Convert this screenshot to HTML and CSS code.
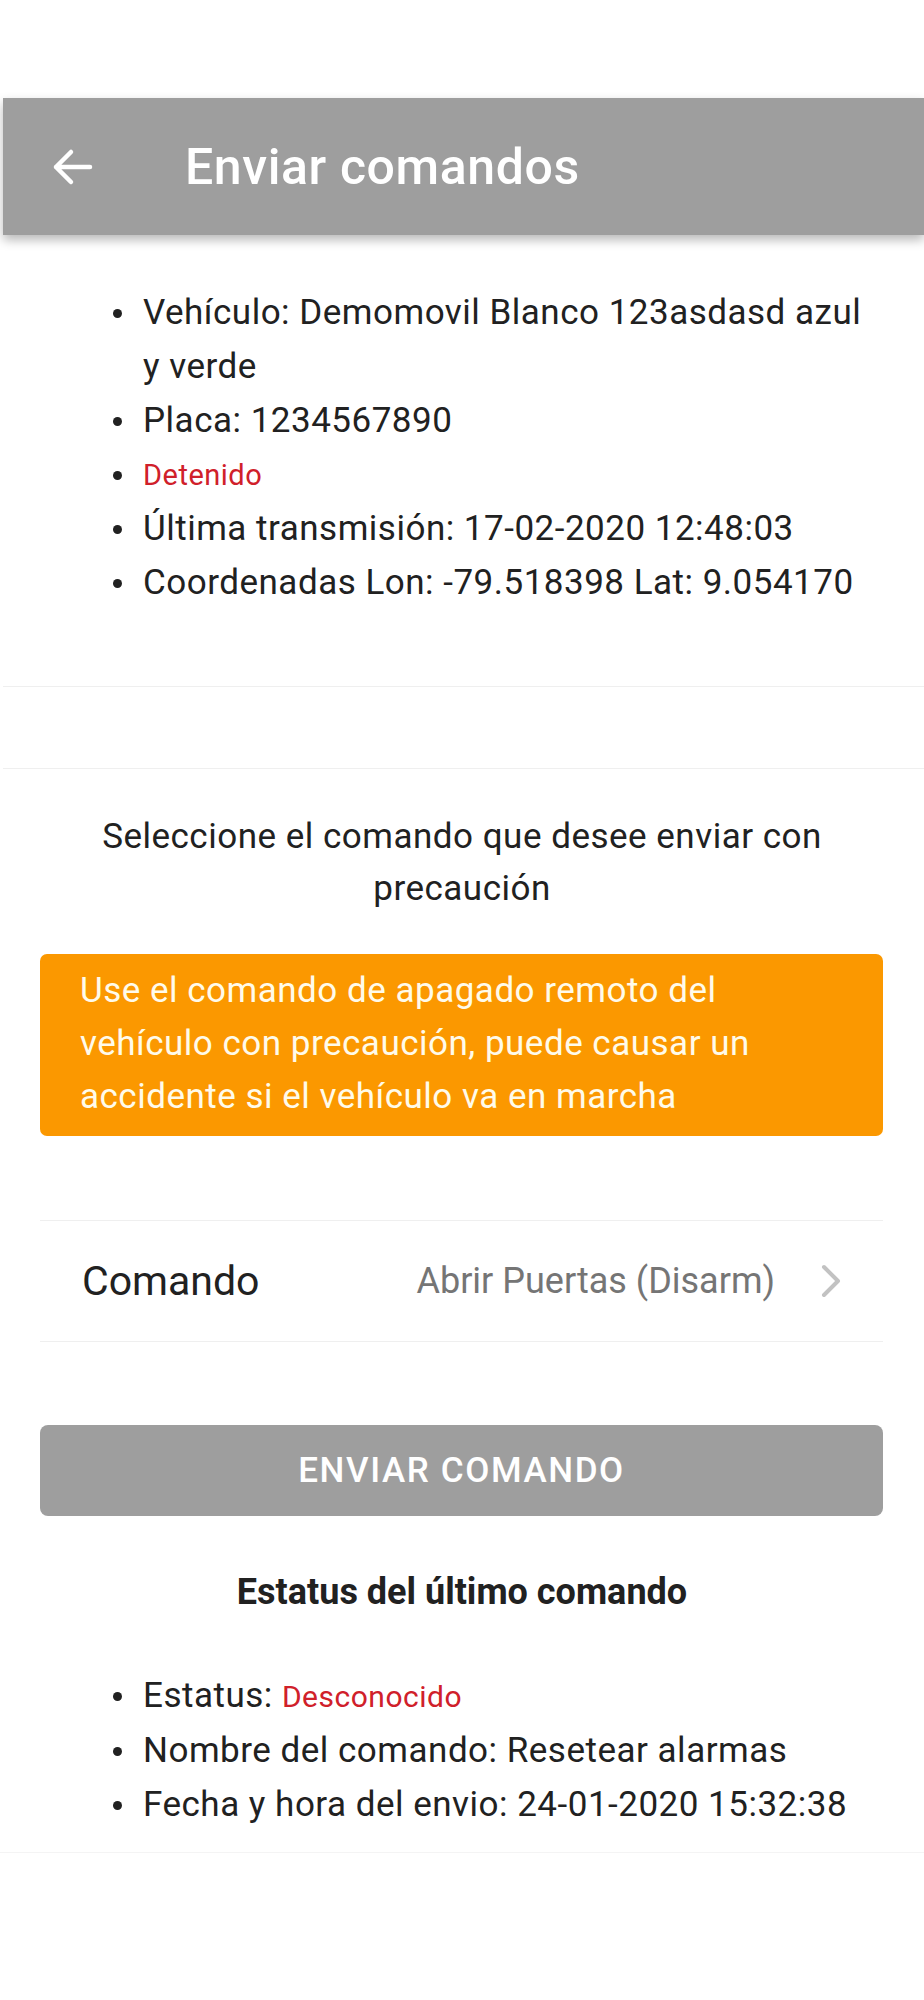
FILE: index.html
```html
<!DOCTYPE html>
<html lang="es">
<head>
  <meta charset="UTF-8" />
  <title>Enviar comandos</title>
  <link rel="stylesheet" href="styles.css">
</head>
<body>

  <div class="status-space"></div>

  <header class="appbar">
    <button class="back-btn" aria-label="Volver">
      <svg width="44" height="44" viewBox="0 0 44 44">
        <path d="M40 22 H6 M21 7 L6 22 L21 37" fill="none" stroke="#ffffff" stroke-width="4.5" stroke-linecap="round" stroke-linejoin="round"/>
      </svg>
    </button>
    <h1>Enviar comandos</h1>
  </header>

  <ul class="info-list vehicle-info">
    <li>Vehículo: Demomovil Blanco 123asdasd azul y verde</li>
    <li>Placa: 1234567890</li>
    <li class="small"><span class="red">Detenido</span></li>
    <li>Última transmisión: 17-02-2020 12:48:03</li>
    <li>Coordenadas Lon: -79.518398 Lat: 9.054170</li>
  </ul>

  <div class="divider"></div>
  <div class="spacer"></div>
  <div class="divider"></div>

  <p class="select-text">Seleccione el comando que desee enviar con precaución</p>

  <div class="warning">
    Use el comando de apagado remoto del vehículo con precaución, puede causar un accidente si el vehículo va en marcha
  </div>

  <div class="command-row">
    <span class="command-label">Comando</span>
    <span class="command-value">Abrir Puertas (Disarm)</span>
    <svg class="chevron" width="22" height="34" viewBox="0 0 22 34">
      <path d="M4 3 L18 17 L4 31" fill="none" stroke="#c2c2c2" stroke-width="4" stroke-linecap="round" stroke-linejoin="round"/>
    </svg>
  </div>

  <button class="send-btn">Enviar comando</button>

  <h2 class="status-title">Estatus del último comando</h2>

  <ul class="info-list last-status">
    <li>Estatus: <span class="red small-inline">Desconocido</span></li>
    <li>Nombre del comando: Resetear alarmas</li>
    <li>Fecha y hora del envio: 24-01-2020 15:32:38</li>
  </ul>

  <div class="bottom-line"></div>

</body>
</html>
```

FILE: styles.css
```css
body {
  margin: 0;
  font-family: Roboto, 'Noto Sans', sans-serif;
  background: #ffffff;
  color: #212121;
}

.status-space {
  height: 98px;
}

.appbar {
  height: 137px;
  margin-left: 3px;
  background-color: #9e9e9e;
  display: flex;
  align-items: center;
  box-shadow: 0 5px 10px rgba(0, 0, 0, 0.28);
  position: relative;
  z-index: 1;
}

.back-btn {
  background: none;
  border: none;
  padding: 0;
  margin-left: 47px;
  width: 44px;
  height: 44px;
  display: flex;
  cursor: pointer;
}

.appbar h1 {
  margin: 0 0 0 91px;
  font-size: 50px;
  font-weight: 500;
  letter-spacing: 0.6px;
  color: #ffffff;
}

.info-list {
  list-style: none;
  margin: 0;
  padding: 0 54px 0 143px;
  font-size: 35px;
  letter-spacing: 0.5px;
  line-height: 54px;
}

.info-list li {
  position: relative;
}

.info-list li::before {
  content: "";
  position: absolute;
  left: -30px;
  top: 23px;
  width: 9px;
  height: 9px;
  border-radius: 50%;
  background: #212121;
}

.vehicle-info {
  margin-top: 51px;
  margin-bottom: 76px;
}

.info-list li.small {
  font-size: 29px;
}

.red {
  color: #d0202a;
}

.small-inline {
  font-size: 30px;
}

.divider {
  height: 1px;
  margin-left: 3px;
  background: #efefef;
}

.spacer {
  height: 81px;
}

.select-text {
  margin: 42px 0 0;
  padding: 0 90px;
  text-align: center;
  font-size: 35px;
  letter-spacing: 0.5px;
  line-height: 52px;
}

.warning {
  margin: 39px 41px 0 40px;
  padding: 10px 40px 13px;
  background-color: #fb9800;
  color: #fffbea;
  font-size: 35px;
  letter-spacing: 0.5px;
  line-height: 53px;
  border-radius: 7px;
}

.command-row {
  margin: 84px 41px 0 40px;
  height: 120px;
  border-top: 1px solid #efefef;
  border-bottom: 1px solid #efefef;
  display: flex;
  align-items: center;
  padding: 0 41px 0 42px;
}

.command-label {
  font-size: 41px;
  color: #212121;
}

.command-value {
  margin-left: auto;
  font-size: 36px;
  color: #757575;
}

.chevron {
  margin-left: 45px;
}

.send-btn {
  display: block;
  width: 843px;
  height: 91px;
  margin: 83px 0 0 40px;
  border: none;
  border-radius: 8px;
  background-color: #9e9e9e;
  color: #ffffff;
  font-family: Roboto, sans-serif;
  font-size: 35px;
  font-weight: 500;
  letter-spacing: 1.6px;
  text-transform: uppercase;
  cursor: pointer;
}

.status-title {
  margin: 49px 0 0;
  text-align: center;
  font-size: 36px;
  line-height: 54px;
  font-weight: 700;
}

.last-status {
  margin-top: 50px;
}

.bottom-line {
  height: 1px;
  margin-top: 20px;
  background: #f4f4f4;
}
```
